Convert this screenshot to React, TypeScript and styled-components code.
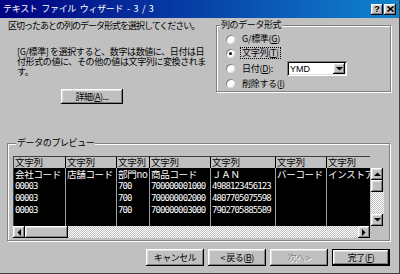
import React from 'react';
import styled, { createGlobalStyle } from 'styled-components';

const columns = [
  { w: 52, cells: ['会社コード', '00003', '00003', '00003'] },
  { w: 51, cells: ['店舗コード', '', '', ''] },
  { w: 33, cells: ['部門no', '700', '700', '700'] },
  { w: 61, cells: ['商品コード', '700000001000', '700000002000', '700000003000'] },
  { w: 65, cells: ['ＪＡＮ', '4988123456123', '4807705075598', '7902705885589'] },
  { w: 51, cells: ['バーコード', '', '', ''] },
  { w: 44, cells: ['インストア', '', '', ''] },
];

const Arrow = ({ dir }: { dir: 'up' | 'down' | 'left' | 'right' }) => {
  const pts = {
    up: '0,4 7,4 3.5,0.5',
    down: '0,0 7,0 3.5,3.5',
    left: '4,0 4,7 0.5,3.5',
    right: '0,0 0,7 3.5,3.5',
  }[dir];
  const vertical = dir === 'up' || dir === 'down';
  return (
    <svg width={vertical ? 7 : 4} height={vertical ? 4 : 7}>
      <polygon points={pts} fill="#000" />
    </svg>
  );
};

const App = () => {
  return (
    <>
      <GlobalStyle />
      <Window>
        <TitleBar>
          <Title>テキスト ファイル ウィザード - 3 / 3</Title>
          <CaptionButtons>
            <CaptionButton>?</CaptionButton>
            <CaptionButton>
              <svg width="7" height="6">
                <path d="M0.5 0.5 L6.5 5.5 M6.5 0.5 L0.5 5.5" stroke="#000" strokeWidth="1.6" />
              </svg>
            </CaptionButton>
          </CaptionButtons>
        </TitleBar>

        <Body>
          <TopSection>
            <LeftCol>
              <Lead>区切ったあとの列のデータ形式を選択してください。</Lead>
              <Note>
                [G/標準] を選択すると、数字は数値に、日付は日<br />
                付形式の値に、その他の値は文字列に変換されま<br />
                す。
              </Note>
              <DetailButton>詳細(<u>A</u>)...</DetailButton>
            </LeftCol>

            <Group>
              <Legend>列のデータ形式</Legend>
              <RadioList>
                <RadioRow $h={14}>
                  <Radio />
                  <RadioLabel>G/標準(<u>G</u>)</RadioLabel>
                </RadioRow>
                <RadioRow $h={14}>
                  <Radio $checked />
                  <RadioLabel $focus>文字列(<u>T</u>)</RadioLabel>
                </RadioRow>
                <RadioRow $h={17}>
                  <Radio />
                  <RadioLabel $width={47}>日付(<u>D</u>):</RadioLabel>
                  <Combo>
                    <ComboText>YMD</ComboText>
                    <ComboButton>
                      <Arrow dir="down" />
                    </ComboButton>
                  </Combo>
                </RadioRow>
                <RadioRow $h={13}>
                  <Radio />
                  <RadioLabel>削除する(<u>I</u>)</RadioLabel>
                </RadioRow>
              </RadioList>
            </Group>
          </TopSection>

          <PreviewGroup>
            <Legend>データのプレビュー</Legend>
            <PreviewFrame>
              <Table>
                {columns.map((col, i) => (
                  <Column key={i} style={{ width: col.w }}>
                    <HeadCell>文字列</HeadCell>
                    <ColumnBody>
                      {col.cells.map((c, j) => (
                        <Cell key={j} $jp={j === 0}>
                          {c}
                        </Cell>
                      ))}
                    </ColumnBody>
                  </Column>
                ))}
              </Table>
              <VScroll>
                <ScrollButton>
                  <Arrow dir="up" />
                </ScrollButton>
                <ScrollButton />
                <Track />
                <ScrollButton>
                  <Arrow dir="down" />
                </ScrollButton>
              </VScroll>
              <HScroll>
                <ScrollButton>
                  <Arrow dir="left" />
                </ScrollButton>
                <ScrollButton $width={43} />
                <Track />
                <ScrollButton>
                  <Arrow dir="right" />
                </ScrollButton>
              </HScroll>
            </PreviewFrame>
          </PreviewGroup>

          <ButtonRow>
            <Button>キャンセル</Button>
            <Button>&lt; 戻る(<u>B</u>)</Button>
            <Button disabled>次へ &gt;</Button>
            <Button $default>完了(<u>F</u>)</Button>
          </ButtonRow>
        </Body>
      </Window>
    </>
  );
};

export default App;

// Styled Components
const GlobalStyle = createGlobalStyle`
  html, body {
    margin: 0;
    padding: 0;
    background: #c0c0c0;
  }
  body {
    font-family: "Noto Sans CJK JP", "Liberation Sans", sans-serif;
    font-size: 9px;
    letter-spacing: -1px;
    color: #000;
  }
  u {
    text-decoration-thickness: 1px;
    text-underline-offset: 1px;
  }
`;

const raised = `
  background: #c0c0c0;
  box-shadow: inset -1px -1px #000, inset 1px 1px #fff, inset -2px -2px #808080, inset 2px 2px #dfdfdf;
`;

const Window = styled.div`
  width: 400px;
  height: 274px;
  box-sizing: border-box;
  background: #c0c0c0;
  border-right: 1px solid #404040;
  border-bottom: 1px solid #404040;
  display: flex;
  flex-direction: column;
  overflow: hidden;
`;

const TitleBar = styled.div`
  height: 18px;
  flex-shrink: 0;
  display: flex;
  align-items: center;
  justify-content: space-between;
  padding: 0 3px;
  background: linear-gradient(90deg, #000080, #1084d0);
  color: #fff;
`;

const Title = styled.span`
  line-height: 12px;
  letter-spacing: -0.3px;
  word-spacing: 2px;
  white-space: pre;
`;

const CaptionButtons = styled.div`
  display: flex;
  gap: 1px;
`;

const CaptionButton = styled.div`
  ${raised}
  width: 12px;
  height: 11px;
  display: flex;
  align-items: center;
  justify-content: center;
  color: #000;
  font-family: "Liberation Sans", sans-serif;
  font-weight: bold;
  font-size: 9px;
  letter-spacing: 0;
  line-height: 9px;
`;

const Body = styled.div`
  flex: 1;
  display: flex;
  flex-direction: column;
  padding: 0 9px 0 7px;
`;

const TopSection = styled.div`
  display: grid;
  grid-template-columns: 200px 175px;
  column-gap: 9px;
  height: 120px;
  align-items: start;
`;

const LeftCol = styled.div`
  display: flex;
  flex-direction: column;
  align-items: flex-start;
  padding: 3px 0 0 1px;
`;

const Lead = styled.div`
  line-height: 10px;
  white-space: nowrap;
`;

const Note = styled.div`
  margin-top: 16px;
  padding-left: 9px;
  line-height: 10px;
  letter-spacing: -0.4px;
  white-space: nowrap;
`;

const Button = styled.button<{ $default?: boolean }>`
  ${raised}
  width: 58px;
  height: 17px;
  border: none;
  padding: 0;
  font-family: inherit;
  font-size: 9px;
  letter-spacing: -0.5px;
  line-height: 10px;
  color: #000;
  ${(p) =>
    p.$default &&
    `box-shadow: inset 0 0 0 1px #000, inset -2px -2px #000, inset 2px 2px #fff, inset -3px -3px #808080, inset 3px 3px #dfdfdf;`}

  &:disabled {
    color: #808080;
    text-shadow: 1px 1px 0 #fff;
  }
`;

const DetailButton = styled(Button)`
  width: 62px;
  height: 15px;
  margin: 12px 0 0 53px;
`;

const Group = styled.fieldset`
  margin: 2px 0 0;
  padding: 2px 0 1px;
  border: 1px solid #808080;
  box-shadow: inset 1px 1px #fff, 1px 1px #fff;
  min-width: 0;
`;

const Legend = styled.legend`
  margin-left: 3px;
  padding: 0 1px;
  line-height: 10px;
  letter-spacing: -0.4px;
  background: #c0c0c0;
`;

const RadioList = styled.div`
  display: flex;
  flex-direction: column;
  padding-left: 9px;
`;

const RadioRow = styled.div<{ $h: number }>`
  display: flex;
  align-items: center;
  height: ${(p) => p.$h}px;
`;

const Radio = styled.span<{ $checked?: boolean }>`
  position: relative;
  width: 9px;
  height: 9px;
  border-radius: 50%;
  background: #fff;
  box-shadow: inset 1px 1px #808080, inset -1px -1px #dfdfdf;
  margin-right: 5px;
  flex-shrink: 0;

  &::after {
    content: '';
    display: ${(p) => (p.$checked ? 'block' : 'none')};
    position: absolute;
    left: 3px;
    top: 3px;
    width: 3px;
    height: 3px;
    border-radius: 50%;
    background: #000;
  }
`;

const RadioLabel = styled.span<{ $focus?: boolean; $width?: number }>`
  line-height: 10px;
  letter-spacing: -0.3px;
  white-space: nowrap;
  padding: 0 1px;
  border: 1px ${(p) => (p.$focus ? 'dotted #000' : 'solid transparent')};
  ${(p) => p.$width && `width: ${p.$width}px; box-sizing: border-box;`}
`;

const Combo = styled.div`
  width: 60px;
  height: 15px;
  box-sizing: border-box;
  display: flex;
  align-items: center;
  justify-content: space-between;
  padding: 2px;
  background: #fff;
  box-shadow: inset 1px 1px #808080, inset -1px -1px #fff, inset 2px 2px #000, inset -2px -2px #dfdfdf;
`;

const ComboText = styled.span`
  padding-left: 1px;
  font-family: "Liberation Sans", sans-serif;
  font-size: 9px;
  letter-spacing: 0;
  line-height: 10px;
`;

const ComboButton = styled.div`
  ${raised}
  width: 12px;
  height: 11px;
  display: flex;
  align-items: center;
  justify-content: center;
`;

const PreviewGroup = styled(Group)`
  width: 383px;
  box-sizing: border-box;
  margin: 0;
  padding: 8px 0 2px 5px;
`;

const PreviewFrame = styled.div`
  display: grid;
  grid-template-columns: 357px 14px;
  grid-template-rows: 12px 58px 12px;
`;

const Table = styled.div`
  grid-column: 1;
  grid-row: 1 / span 2;
  display: flex;
  border-left: 1px solid #404040;
  overflow: hidden;
`;

const Column = styled.div`
  display: flex;
  flex-direction: column;
  flex-shrink: 0;
  box-sizing: border-box;
  overflow: hidden;
`;

const HeadCell = styled.div`
  height: 12px;
  box-sizing: border-box;
  border-top: 1px solid #404040;
  border-right: 1px solid #000;
  padding-left: 1px;
  font-size: 9.5px;
  letter-spacing: -0.3px;
  line-height: 11px;
  white-space: nowrap;
`;

const ColumnBody = styled.div`
  flex: 1;
  background: #000;
  border-right: 1px solid #a0a0a0;
`;

const Cell = styled.div<{ $jp?: boolean }>`
  height: 12px;
  padding-left: 1px;
  white-space: nowrap;
  overflow: hidden;
  color: #fff;
  ${(p) =>
    p.$jp
      ? `font-size: 9.5px; letter-spacing: -0.3px; line-height: 13px;`
      : `font-family: "DejaVu Sans Mono", monospace; font-size: 9px; letter-spacing: -0.9px; line-height: 12px;`}
`;

const VScroll = styled.div`
  grid-column: 2;
  grid-row: 2;
  display: flex;
  flex-direction: column;
  padding-left: 1px;
`;

const HScroll = styled.div`
  grid-column: 1;
  grid-row: 3;
  display: flex;
`;

const ScrollButton = styled.div<{ $width?: number }>`
  ${raised}
  width: ${(p) => p.$width || 12}px;
  height: 12px;
  flex-shrink: 0;
  display: flex;
  align-items: center;
  justify-content: center;
  box-sizing: border-box;
`;

const Track = styled.div`
  flex: 1;
  background: repeating-conic-gradient(#c0c0c0 0 25%, #fff 0 50%) 0 0 / 2px 2px;
`;

const ButtonRow = styled.div`
  display: flex;
  justify-content: flex-end;
  gap: 4px;
  margin-top: 8px;
`;
